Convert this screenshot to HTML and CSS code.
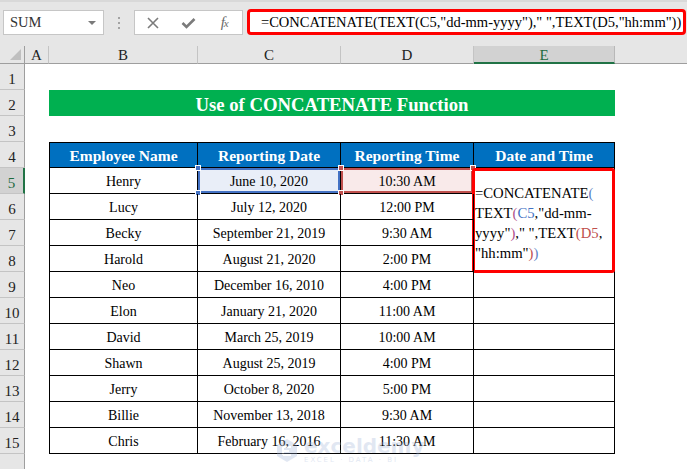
FILE: index.html
```html
<!DOCTYPE html>
<html>
<head>
<meta charset="utf-8">
<link rel="stylesheet" href="styles.css">
</head>
<body>
<div class="topbar">
  <div class="namebox"><span>SUM</span><span class="caret"></span></div>
  <div class="grip"><i></i><i></i><i></i></div>
  <div class="fbtns">
    <div class="fbtn"><svg width="12" height="12" viewBox="0 0 12 12"><path d="M1 1 L11 11 M11 1 L1 11" stroke="#7b7b7b" stroke-width="1.6" fill="none"/></svg></div>
    <div class="fbtn"><svg width="15" height="12" viewBox="0 0 15 12"><path d="M1.5 6 L5.5 10 L13.5 2" stroke="#7b7b7b" stroke-width="2.6" fill="none"/></svg></div>
    <div class="fbtn"><span class="fx">f<small>x</small></span></div>
  </div>
  <div class="formula">=CONCATENATE(TEXT(C5,"dd-mm-yyyy")," ",TEXT(D5,"hh:mm"))</div>
</div>
<div class="sheet">
  <div class="corner"></div>
  <div class="ch">A</div><div class="ch">B</div><div class="ch">C</div><div class="ch">D</div><div class="ch sel">E</div><div class="ch last"></div>

  <div class="rh">1</div><div class="c"></div><div class="c"></div><div class="c"></div><div class="c"></div><div class="c"></div><div class="c"></div>
  <div class="rh">2</div><div class="c"></div><div class="title">Use of CONCATENATE Function</div><div class="c"></div>
  <div class="rh">3</div><div class="c"></div><div class="c"></div><div class="c"></div><div class="c"></div><div class="c"></div><div class="c"></div>
  <div class="rh">4</div><div class="c"></div><div class="th first">Employee Name</div><div class="th">Reporting Date</div><div class="th">Reporting Time</div><div class="th">Date and Time</div><div class="c"></div>

  <div class="rh sel">5</div><div class="c"></div><div class="t first">Henry</div>
  <div class="t selc">June 10, 2020<i class="hd tl"></i><i class="hd bl"></i></div>
  <div class="t seld">10:30 AM<i class="hd tl"></i><i class="hd bl"></i><i class="hd tr"></i></div>
  <div class="e5">=CONCATENATE<span class="p1">(</span><br>TEXT<span class="p2">(</span><span class="rc">C5</span>,"dd-mm-<br>yyyy"<span class="p2">)</span>," ",TEXT<span class="p3">(</span><span class="rd">D5</span>,<br>"hh:mm"<span class="p3">)</span><span class="p1">)</span></div>
  <div class="c"></div>

  <div class="rh">6</div><div class="c"></div><div class="t first">Lucy</div><div class="t">July 12, 2020</div><div class="t">12:00 PM</div><div class="c"></div>
  <div class="rh">7</div><div class="c"></div><div class="t first">Becky</div><div class="t">September 21, 2019</div><div class="t">9:30 AM</div><div class="c"></div>
  <div class="rh">8</div><div class="c"></div><div class="t first">Harold</div><div class="t">August 21, 2020</div><div class="t">2:00 PM</div><div class="c"></div>
  <div class="rh">9</div><div class="c"></div><div class="t first">Neo</div><div class="t">December 16, 2010</div><div class="t">4:00 PM</div><div class="t"></div><div class="c"></div>
  <div class="rh">10</div><div class="c"></div><div class="t first">Elon</div><div class="t">January 21, 2020</div><div class="t">11:00 AM</div><div class="t"></div><div class="c"></div>
  <div class="rh">11</div><div class="c"></div><div class="t first">David</div><div class="t">March 25, 2019</div><div class="t">10:00 AM</div><div class="t"></div><div class="c"></div>
  <div class="rh">12</div><div class="c"></div><div class="t first">Shawn</div><div class="t">August 25, 2019</div><div class="t">4:00 PM</div><div class="t"></div><div class="c"></div>
  <div class="rh">13</div><div class="c"></div><div class="t first">Jerry</div><div class="t">October 8, 2020</div><div class="t">5:00 PM</div><div class="t"></div><div class="c"></div>
  <div class="rh">14</div><div class="c"></div><div class="t first">Billie</div><div class="t">November 13, 2018</div><div class="t">9:30 AM</div><div class="t"></div><div class="c"></div>
  <div class="rh">15</div><div class="c"></div><div class="t first">Chris</div><div class="t">February 16, 2016</div><div class="t">11:30 AM</div><div class="t"></div><div class="c"></div>
  <div class="rh"></div><div class="c"></div><div class="c"></div><div class="c"></div><div class="c"></div><div class="c"></div><div class="c"></div>

  <div class="watermark">
    <svg width="26" height="26" viewBox="0 0 26 26"><path d="M13 2 L23 8 L23 19 L13 25 L3 19 L3 8 Z" fill="#9fb3d6"/><path d="M9 10 L17 10 M9 14 L15 14 M9 18 L17 18 M9 10 L9 18" stroke="#fff" stroke-width="2" fill="none"/></svg>
    <div class="wmtext"><span class="wm1">exceldemy</span><span class="wm2">EXCEL · DATA · BI</span></div>
  </div>
</div>
</body>
</html>
```
FILE: styles.css
```css
* { box-sizing: border-box; margin: 0; padding: 0; }
html, body { width: 687px; height: 469px; overflow: hidden; background: #fff; }
body { font-family: "Liberation Serif", "Times New Roman", serif; color: #000; }

.topbar {
  height: 46px;
  background: #e6e6e6;
  border-top: 2px solid #d9d9d9;
  display: flex;
  align-items: flex-start;
  padding: 7px 0 0 3px;
}
.namebox {
  width: 101px; height: 25px; margin-top: 1px;
  background: #fff; border: 1px solid #c6c6c6;
  display: flex; align-items: center;
  padding-left: 6px;
  font-family: "Liberation Serif", "Times New Roman", serif;
  font-size: 14.5px; color: #333;
}
.caret {
  margin-left: auto; margin-right: 7px;
  width: 0; height: 0;
  border-left: 4px solid transparent;
  border-right: 4px solid transparent;
  border-top: 4px solid #7a7a7a;
}
.grip {
  width: 30px; height: 25px; margin-top: 1px;
  display: flex; flex-direction: column; align-items: center; justify-content: center; gap: 3px;
}
.grip i { display: block; width: 2px; height: 2px; background: #a3a3a3; }
.fbtns {
  width: 109px; height: 25px; margin-top: 1px;
  background: #fff; border: 1px solid #c6c6c6;
  display: flex;
}
.fbtn { flex: 1; display: flex; align-items: center; justify-content: center; }
.fx { font-style: italic; font-size: 15px; color: #6a6a6a; letter-spacing: -1px; }
.fx small { font-size: 11px; }
.formula {
  margin-left: 4px; width: 439px; height: 26px;
  border: 3px solid #ff0000; border-radius: 4px;
  background: #fff;
  padding-left: 11px;
  font-size: 14.5px; line-height: 20px;
  white-space: nowrap; overflow: hidden;
}

.sheet {
  position: relative;
  display: grid;
  grid-template-columns: 25px 24px 149px 143px 133px 141px 72px;
  grid-template-rows: 18px;
  grid-auto-rows: 26px;
}
.corner {
  background: #e6e6e6;
  border-right: 1px solid #9e9e9e;
  border-bottom: 1px solid #9e9e9e;
  position: relative;
}
.corner::after {
  content: ""; position: absolute; right: 3px; bottom: 3px;
  width: 0; height: 0;
  border-left: 11px solid transparent;
  border-bottom: 11px solid #bfbfbf;
}
.ch {
  background: #e6e6e6;
  border-right: 1px solid #c4c4c4;
  border-bottom: 1px solid #9e9e9e;
  text-align: center;
  font-size: 15px; line-height: 17px; padding-top: 1px; color: #222;
}
.ch.last { border-right: none; }
.ch.sel { background: #d2d2d2; border-bottom: 2px solid #217346; color: #1d6b3f; border-right-color: #b8b8b8; }
.rh {
  background: #e6e6e6;
  border-right: 1px solid #9e9e9e;
  border-bottom: 1px solid #c4c4c4;
  text-align: center;
  font-size: 15px; line-height: 20px; padding-top: 5px; color: #222;
}
.rh.sel { background: #d2d2d2; border-right: 2px solid #217346; color: #1d6b3f; }
.c { background: #fff; }

.title {
  grid-column: span 4;
  background: #00b050;
  color: #fff;
  font-weight: bold;
  font-size: 18.7px;
  line-height: 26px;
  padding-top: 2px;
  text-align: center;
}
.th {
  background: #0070c0;
  color: #fff;
  font-weight: bold;
  font-size: 15.5px;
  line-height: 24px;
  padding-top: 1px;
  text-align: center;
  border-top: 1px solid #000;
  border-right: 1px solid #000;
  border-bottom: 1px solid #000;
}
.th.first, .t.first { border-left: 1px solid #000; }
.t {
  position: relative;
  font-size: 14px;
  line-height: 25px;
  padding-top: 1px;
  text-align: center;
  border-right: 1px solid #000;
  border-bottom: 1px solid #000;
}
.selc { background: #e9eef8; box-shadow: inset 0 0 0 2px #4472c4; }
.seld { background: #f9eaea; box-shadow: inset 0 0 0 2px #c0504d; }
.hd { position: absolute; width: 6px; height: 6px; border: 1px solid #fff; }
.selc .hd { background: #4472c4; }
.seld .hd { background: #c0504d; }
.hd.tl { left: -3px; top: -3px; }
.hd.bl { left: -3px; bottom: -3px; }
.hd.tr { right: -3px; top: -3px; }

.e5 {
  grid-row: span 4;
  position: relative;
  border-right: 1px solid #000;
  border-bottom: 1px solid #000;
  padding: 15px 0 0 1px;
  font-size: 14.7px;
  line-height: 20px;
  white-space: nowrap;
}
.e5::after {
  content: ""; position: absolute;
  left: -2px; top: 0; right: -1px; bottom: -2px;
  border: 3px solid #ff0000; border-radius: 3px;
}
.p1 { color: #5b7fc4; }
.p2 { color: #b0508a; }
.p3 { color: #c0504d; }
.rc { color: #4472c4; }
.rd { color: #c0504d; }

.watermark {
  position: absolute; left: 274px; top: 390px;
  display: flex; align-items: center; gap: 4px;
  opacity: 0.3;
  pointer-events: none;
}
.wmtext { display: flex; flex-direction: column; line-height: 1; }
.wm1 { font-family: "DejaVu Sans", sans-serif; font-weight: bold; font-size: 20px; color: #9fb3d6; }
.wm2 { font-family: "DejaVu Sans", sans-serif; font-size: 7px; letter-spacing: 2px; color: #9fb3d6; margin-top: 1px; }
```
